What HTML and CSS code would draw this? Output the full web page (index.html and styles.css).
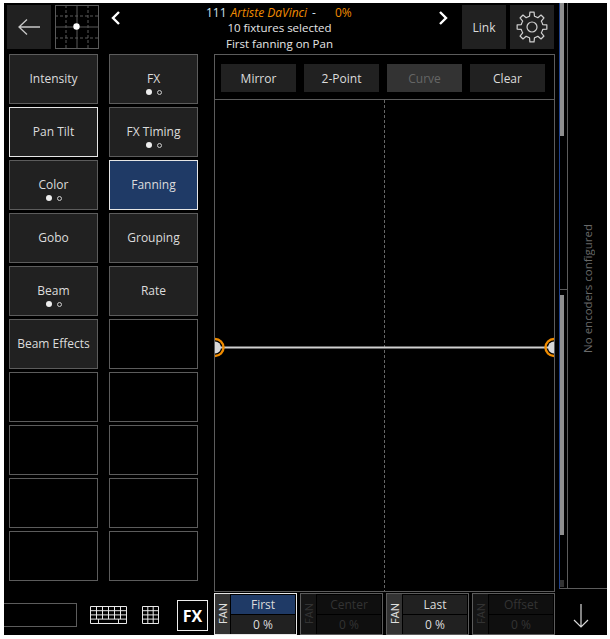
FILE: index.html
```html
<!DOCTYPE html>
<html lang="en">
<head>
<meta charset="utf-8">
<title>Fanning</title>
<link rel="stylesheet" href="styles.css">
</head>
<body>
<div class="app">
  <div class="work">
    <header class="top">
      <button class="square"><svg width="24" height="18" viewBox="0 0 24 18"><path d="M23 9H2M10 1.5 2 9l8 7.5" fill="none" stroke="#c8c8c8" stroke-width="1.3"/></svg></button>
      <div class="pad"><svg width="44" height="44" viewBox="0 0 44 44"><rect x=".5" y=".5" width="43" height="43" fill="none" stroke="#5a5a5a"/><path d="M22 0v44M0 22h44" stroke="#5a5a5a" fill="none"/><path d="M11 0v44M33 0v44M0 11h44M0 33h44" stroke="#5a5a5a" stroke-dasharray="3 2" fill="none"/><circle cx="21.5" cy="21.5" r="3.2" fill="#fff"/></svg></div>
      <svg class="chev-l" width="10" height="16" viewBox="0 0 10 16"><path d="M8 2 2 8l6 6" fill="none" stroke="#fff" stroke-width="2.4"/></svg>
      <div class="info">
        <div class="line first"><span class="num">111</span><i class="name">Artiste DaVinci</i><span class="dash">-</span><span class="pct">0%</span></div>
        <div class="line">10 fixtures selected</div>
        <div class="line third">First fanning on Pan</div>
      </div>
      <svg class="chev-r" width="10" height="16" viewBox="0 0 10 16"><path d="M2 2l6 6-6 6" fill="none" stroke="#fff" stroke-width="2.4"/></svg>
      <button class="square">Link</button>
      <button class="square gear"><svg width="32" height="32" viewBox="0 0 32 32"><defs><path id="tooth" d="M11.8 5.84 13.53 5.28 13.91 1.15 18.09 1.15 18.47 5.28 20.2 5.84" fill="none" stroke="#d0d0d0" stroke-width="1.2" stroke-linejoin="round"/></defs><use href="#tooth"/><use href="#tooth" transform="rotate(45 16 16)"/><use href="#tooth" transform="rotate(90 16 16)"/><use href="#tooth" transform="rotate(135 16 16)"/><use href="#tooth" transform="rotate(180 16 16)"/><use href="#tooth" transform="rotate(225 16 16)"/><use href="#tooth" transform="rotate(270 16 16)"/><use href="#tooth" transform="rotate(315 16 16)"/><circle cx="16" cy="16" r="5" fill="none" stroke="#d0d0d0" stroke-width="1.2"/></svg></button>
    </header>
    <div class="content">
      <div class="tiles">
        <div class="tile">Intensity</div>
        <div class="tile">FX<div class="dots"><b></b><s></s></div></div>
        <div class="tile sel">Pan Tilt</div>
        <div class="tile">FX Timing<div class="dots"><b></b><s></s></div></div>
        <div class="tile">Color<div class="dots"><b></b><s></s></div></div>
        <div class="tile active">Fanning</div>
        <div class="tile">Gobo</div>
        <div class="tile">Grouping</div>
        <div class="tile">Beam<div class="dots"><b></b><s></s></div></div>
        <div class="tile">Rate</div>
        <div class="tile">Beam Effects</div>
        <div class="tile empty"></div>
        <div class="tile empty"></div>
        <div class="tile empty"></div>
        <div class="tile empty"></div>
        <div class="tile empty"></div>
        <div class="tile empty"></div>
        <div class="tile empty"></div>
        <div class="tile empty"></div>
        <div class="tile empty"></div>
      </div>
      <section class="panel">
        <div class="tools">
          <button class="tool">Mirror</button>
          <button class="tool">2-Point</button>
          <button class="tool off">Curve</button>
          <button class="tool">Clear</button>
        </div>
        <svg class="curve" width="339" height="491" viewBox="0 0 339 491">
          <path d="M169.5 0V491" stroke="#666" stroke-dasharray="3 2" fill="none"/>
          <path d="M0 247.5H339" stroke="#d0d0d0" stroke-width="2" fill="none"/>
          <circle cx="0" cy="247.5" r="6" fill="#d8d8d8"/>
          <circle cx="339" cy="247.5" r="6" fill="#d8d8d8"/>
          <circle cx="0" cy="247.5" r="8.5" fill="none" stroke="#f08c00" stroke-width="2.4"/>
          <circle cx="339" cy="247.5" r="8.5" fill="none" stroke="#f08c00" stroke-width="2.4"/>
        </svg>
      </section>
    </div>
    <footer class="bottom">
      <div class="controls">
        <div class="field"></div>
        <svg class="kb" width="37" height="18" viewBox="0 0 37 18"><path d="M.5.5h36v17H.5zM.5 4.7h36M.5 8.9h36M.5 13.1h36M6.5.5v12.6M12.5.5v12.6M18.5.5v12.6M24.5.5v12.6M30.5.5v12.6M8.5 13.1v4.4M28.5 13.1v4.4" fill="none" stroke="#e8e8e8"/></svg>
        <svg class="numgrid" width="17" height="18" viewBox="0 0 17 18"><path d="M.5.5h16v17H.5zM.5 4.7h16M.5 8.9h16M.5 13.1h16M5.8.5v17M11.2.5v17" fill="none" stroke="#e8e8e8"/></svg>
        <button class="fx">FX</button>
      </div>
      <div class="fans">
        <div class="fan picked"><span class="side">FAN</span><div class="vals"><div class="head blue">First</div><div class="val">0 %</div></div></div>
        <div class="fan off"><span class="side">FAN</span><div class="vals"><div class="head">Center</div><div class="val">0 %</div></div></div>
        <div class="fan"><span class="side">FAN</span><div class="vals"><div class="head">Last</div><div class="val">0 %</div></div></div>
        <div class="fan off"><span class="side">FAN</span><div class="vals"><div class="head">Offset</div><div class="val">0 %</div></div></div>
      </div>
    </footer>
  </div>
  <aside class="side-col">
    <div class="side-top">
      <div class="scroll">
        <div class="thumb upper"></div>
        <div class="cap"></div>
        <div class="thumb lower"></div>
        <div class="thumb stub"></div>
      </div>
      <div class="encoders"><span>No encoders configured</span></div>
    </div>
    <div class="arrow"><svg width="16" height="24" viewBox="0 0 16 24"><path d="M8 0v23M1 16l7 7 7-7" fill="none" stroke="#d8d8d8" stroke-width="1.2"/></svg></div>
  </aside>
</div>
</body>
</html>
```
FILE: styles.css
```css
* { box-sizing: border-box; }
html, body { height: 100%; }
body {
  margin: 0;
  padding: 3px 3px 4px 4px;
  background: #fff;
  font-family: "Open Sans", "Noto Sans", sans-serif;
  font-size: 12px;
  color: #dcdcdc;
}
button { font: inherit; color: inherit; border: 0; padding: 0; }
.app { display: flex; width: 603px; height: 632px; background: #000; }
.work { width: 551px; display: flex; flex-direction: column; }

.top { height: 51px; padding: 2px 0 0 3px; display: flex; align-items: flex-start; flex: none; }
.square { width: 44px; height: 44px; background: #212121; display: flex; align-items: center; justify-content: center; flex: none; margin-right: 4px; }
.square.gear { margin-right: 1px; }
.pad { width: 44px; height: 44px; flex: none; }
.pad svg { display: block; }
.chev-l { margin: 5px 0 0 12px; flex: none; }
.chev-r { margin: 5px 14px 0 0; flex: none; }
.info { flex: 1; min-width: 0; text-align: center; font-size: 11.5px; line-height: 15px; color: #e6e6e6; }
.line.first { display: flex; padding-left: 85px; color: #cfe0f0; font-size: 12px; white-space: nowrap; }
.line.third { margin-top: 1px; }
.name { color: #f08c00; margin-left: 4px; }
.dash { margin-left: 5px; }
.pct { color: #f08c00; margin-left: 19px; }

.content { height: 538px; display: flex; padding-left: 5px; flex: none; }
.tiles { display: grid; grid-template-columns: 89px 89px; grid-auto-rows: 50px; column-gap: 11px; row-gap: 3px; width: 205px; }
.tile { border: 1px solid #5c5c5c; background: #212121; text-align: center; padding-top: 15px; line-height: 17px; color: #dcdcdc; }
.tile.sel { border-color: #e6e6e6; }
.tile.active { background: #1f3a66; border-color: #e6e6e6; }
.tile.empty { background: #000; }
.dots { display: flex; justify-content: center; align-items: center; gap: 5px; height: 8px; margin-top: 1px; }
.dots b { width: 6px; height: 6px; border-radius: 50%; background: #eee; }
.dots s { width: 5px; height: 5px; border-radius: 50%; border: 1px solid #ccc; }

.panel { width: 341px; height: 538px; border: 1px solid #5c5c5c; display: flex; flex-direction: column; }
.tools { height: 45px; flex: none; border-bottom: 1px solid #5c5c5c; display: flex; gap: 8px; padding: 9px 0 0 6px; }
.tool { width: 75px; height: 28px; background: #212121; }
.tool.off { background: #333; color: #666; }
.curve { display: block; overflow: hidden; }

.bottom { flex: 1; display: flex; }
.controls { width: 210px; display: flex; align-items: flex-start; }
.field { width: 73px; height: 24px; margin-top: 11px; border: 1px solid #5c5c5c; border-left: 0; flex: none; }
.kb { margin: 14px 0 0 13px; flex: none; }
.numgrid { margin: 14px 0 0 15px; flex: none; }
.fx { width: 31px; height: 31px; margin: 8px 0 0 18px; border: 1px solid #eee; background: #000; color: #fff; font-weight: 700; font-size: 16px; flex: none; }
.fans { display: flex; gap: 3px; height: 42px; margin-top: 1px; }
.fan { width: 83px; height: 42px; border: 1px solid #5c5c5c; display: flex; gap: 1px; background: #000; }
.fan.picked { border-color: #e6e6e6; }
.side { width: 15px; background: #333; writing-mode: vertical-rl; transform: rotate(180deg); text-align: center; font-size: 11px; line-height: 15px; color: #e0e0e0; flex: none; }
.vals { flex: 1; display: flex; flex-direction: column; gap: 1px; padding: 1px 1px 1px 0; }
.head, .val { flex: 1; background: #212121; text-align: center; line-height: 19px; }
.head.blue { background: #1f3a66; }
.fan.off .side { background: #151515; color: #333; }
.fan.off .head, .fan.off .val { background: #0f0f0f; color: #333; }

.side-col { width: 52px; display: flex; flex-direction: column; }
.side-top { height: 586px; display: flex; padding-left: 4px; }
.scroll { width: 9px; height: 586px; border-left: 1px solid #1d3f8a; border-right: 1px solid #5c5c5c; border-bottom: 1px solid #5c5c5c; display: flex; flex-direction: column; }
.thumb { width: 4px; background: #8e8e8e; flex: none; }
.thumb.upper { height: 133px; }
.cap { height: 1px; margin-top: 153px; background: #5c5c5c; flex: none; }
.thumb.lower { height: 240px; margin-top: 5px; }
.thumb.stub { height: 7px; margin-top: 45px; background: #333; }
.encoders { flex: 1; border-bottom: 1px solid #5c5c5c; display: flex; align-items: center; justify-content: center; padding-bottom: 15px; }
.encoders span { writing-mode: vertical-rl; transform: rotate(180deg); color: #6a6a6a; font-size: 11.5px; line-height: 16px; white-space: nowrap; }
.arrow { display: flex; justify-content: center; padding-top: 15px; }
.arrow svg { display: block; }
```
